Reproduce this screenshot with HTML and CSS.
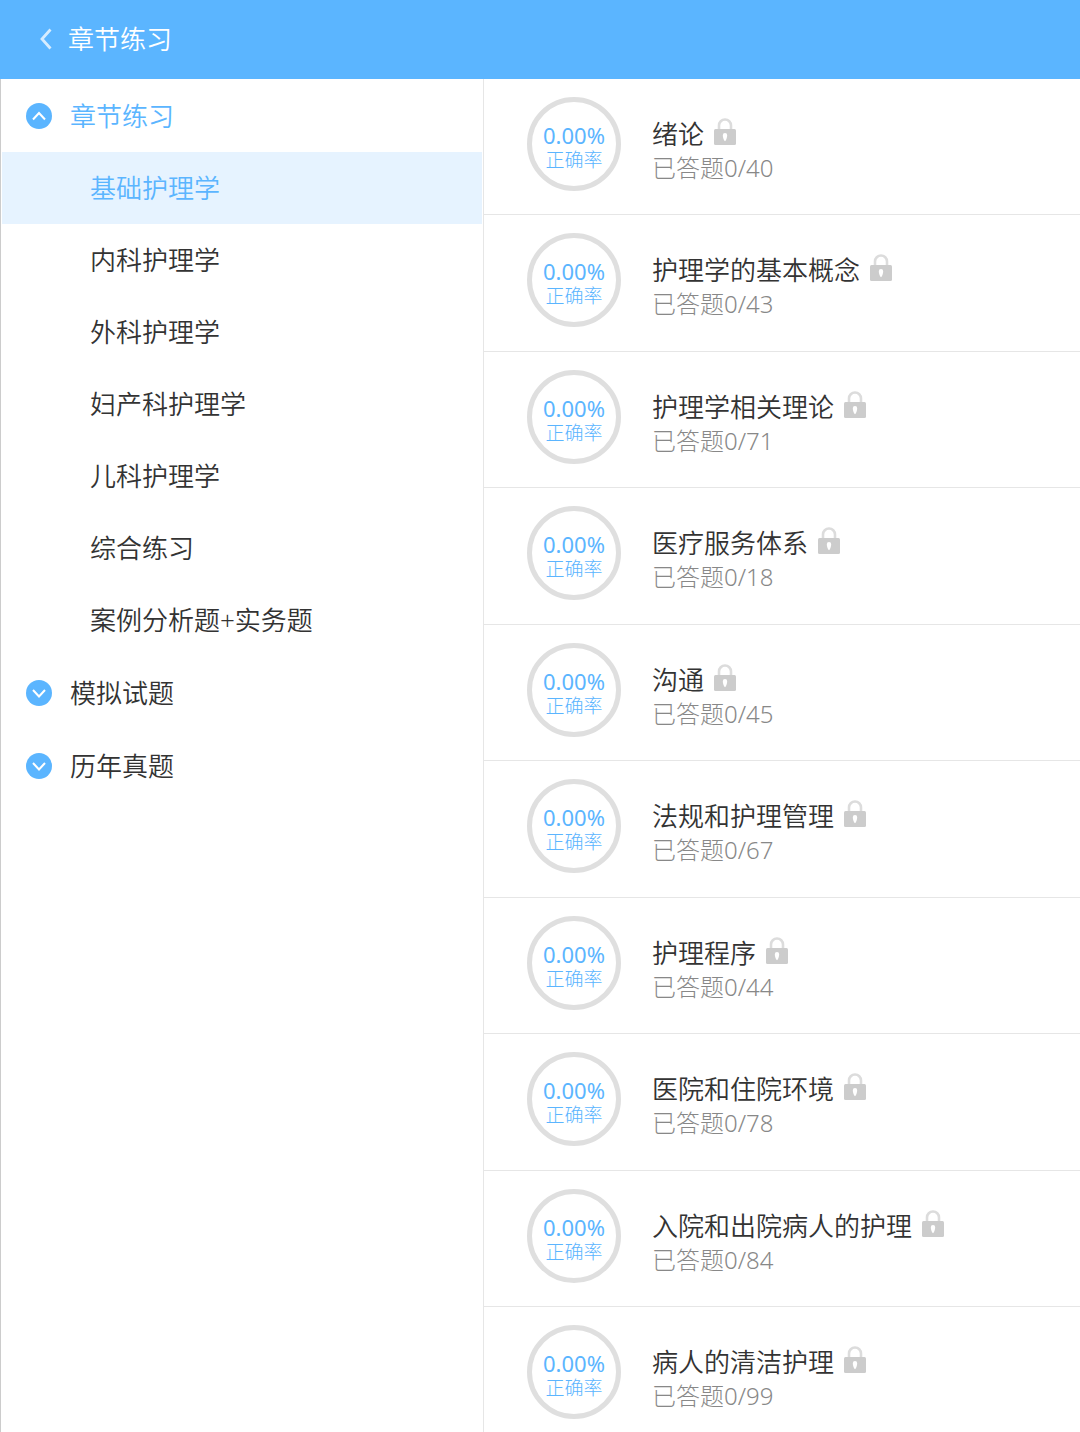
FILE: index.html
```
<!DOCTYPE html>
<html lang="zh-CN">
<head>
    <meta charset="UTF-8">
    <meta name="viewport" content="width=device-width, initial-scale=1.0">
    <title>章节练习</title>
    <link rel="stylesheet" href="styles.css">
</head>
<body>
    <svg class="icon-defs" aria-hidden="true">
        <symbol id="icon-lock" viewBox="0 0 22 27">
            <path d="M5 12V7.500a6 6 0 0 1 12 0V12" fill="none" stroke="#dcdcdc" stroke-width="2.600"/>
            <rect y="11" width="22" height="16" rx="1.500" fill="#ccc"/>
            <path d="M11 15a2.200 2.200 0 0 1 2.200 2.200c0 1.800-.8 5-2.200 6-1.400-1-2.200-4.200-2.200-6A2.200 2.200 0 0 1 11 15z" fill="#fff"/>
        </symbol>
        <symbol id="icon-up" viewBox="0 0 26 26">
            <circle cx="13" cy="13" r="13" fill="#5bb5ff"/>
            <path d="M7 16.500l6-6.500 6 6.500" fill="none" stroke="#fff" stroke-width="2"/>
        </symbol>
        <symbol id="icon-down" viewBox="0 0 26 26">
            <circle cx="13" cy="13" r="13" fill="#5bb5ff"/>
            <path d="M7 10l6 6.500 6-6.500" fill="none" stroke="#fff" stroke-width="2"/>
        </symbol>
    </svg>

    <header class="header">
        <button class="back-button" type="button" aria-label="返回">
            <svg class="back-icon" viewBox="0 0 12 22"><path d="M10.500 1.500L2 11l8.500 9.500" fill="none" stroke="#fff" stroke-opacity=".75" stroke-width="2.800"/></svg>
        </button>
        <h1 class="header-title">章节练习</h1>
    </header>

    <div class="container">
        <nav class="sidebar">
            <button class="group-title open" type="button" aria-expanded="true">
                <svg class="group-icon"><use href="#icon-up"/></svg>
                章节练习
            </button>
            <ul class="subject-list">
                <li><a class="subject active" href="#">基础护理学</a></li>
                <li><a class="subject" href="#">内科护理学</a></li>
                <li><a class="subject" href="#">外科护理学</a></li>
                <li><a class="subject" href="#">妇产科护理学</a></li>
                <li><a class="subject" href="#">儿科护理学</a></li>
                <li><a class="subject" href="#">综合练习</a></li>
                <li><a class="subject" href="#">案例分析题+实务题</a></li>
            </ul>
            <button class="group-title" type="button" aria-expanded="false">
                <svg class="group-icon"><use href="#icon-down"/></svg>
                模拟试题
            </button>
            <button class="group-title" type="button" aria-expanded="false">
                <svg class="group-icon"><use href="#icon-down"/></svg>
                历年真题
            </button>
        </nav>

        <main class="chapter-list" id="chapter-list"></main>
    </div>

    <script>
        const chapters = [
            { name: '绪论', total: 40 },
            { name: '护理学的基本概念', total: 43 },
            { name: '护理学相关理论', total: 71 },
            { name: '医疗服务体系', total: 18 },
            { name: '沟通', total: 45 },
            { name: '法规和护理管理', total: 67 },
            { name: '护理程序', total: 44 },
            { name: '医院和住院环境', total: 78 },
            { name: '入院和出院病人的护理', total: 84 },
            { name: '病人的清洁护理', total: 99 }
        ];

        document.getElementById('chapter-list').innerHTML = chapters.map(chapter => `
            <a class="chapter" href="#">
                <div class="rate">
                    <span class="rate-value">0.00%</span>
                    <span class="rate-label">正确率</span>
                </div>
                <div class="chapter-info">
                    <div class="chapter-name">${chapter.name}<svg class="lock-icon"><use href="#icon-lock"/></svg></div>
                    <div class="chapter-count">已答题0/${chapter.total}</div>
                </div>
            </a>
        `).join('');
    </script>
</body>
</html>
```

FILE: styles.css
```
* {
    box-sizing: border-box;
}

body {
    margin: 0;
    min-height: 100vh;
    display: flex;
    flex-direction: column;
    font-family: "Noto Sans", "Noto Sans CJK SC", sans-serif;
    font-size: 26px;
    font-weight: 350;
    line-height: 36px;
    color: #333;
    background: #fff;
}

button {
    padding: 0;
    border: none;
    background: none;
    font: inherit;
    color: inherit;
    cursor: pointer;
}

a {
    color: inherit;
    text-decoration: none;
}

.icon-defs {
    position: absolute;
    width: 0;
    height: 0;
}

.header {
    display: flex;
    align-items: center;
    height: 79px;
    padding: 0 40px 2px;
    background: #5bb5ff;
    color: #fff;
}

.back-button {
    display: flex;
    padding-right: 16px;
}

.back-icon {
    width: 12px;
    height: 22px;
}

.header-title {
    margin: 0;
    font-size: 26px;
    font-weight: inherit;
}

.container {
    flex: 1;
    display: grid;
    grid-template-columns: minmax(0, 121fr) minmax(0, 149fr);
}

.sidebar {
    padding: 0 1px;
    border-left: 1px solid #ccc;
    border-right: 1px solid #e6e6e6;
}

.group-title {
    display: flex;
    align-items: center;
    gap: 18px;
    width: 100%;
    height: 73px;
    padding-left: 24px;
    text-align: left;
}

.group-title.open {
    color: #5bb5ff;
}

.group-icon {
    width: 26px;
    height: 26px;
}

.subject-list {
    margin: 0;
    padding: 0;
    list-style: none;
}

.subject {
    display: flex;
    align-items: center;
    height: 72px;
    padding-left: 88px;
}

.subject.active {
    background: #e6f3ff;
    color: #5bb5ff;
}

.chapter {
    display: flex;
    align-items: flex-start;
    gap: 31px;
    height: 136px;
    padding: 18px 43px 0;
    border-bottom: 1px solid #e6e6e6;
}

.chapter:nth-child(even) {
    height: 137px;
}

.rate {
    display: flex;
    flex-direction: column;
    align-items: center;
    justify-content: center;
    width: 94px;
    height: 94px;
    padding-top: 8px;
    border: 5px solid #dfdfdf;
    border-radius: 50%;
    line-height: 25px;
    color: #5bb5ff;
}

.rate-value {
    font-size: 22px;
    font-weight: 400;
}

.rate-label {
    font-size: 19px;
    font-weight: 300;
}

.chapter-info {
    padding-top: 19px;
}

.chapter-name {
    display: flex;
    align-items: center;
    gap: 10px;
    line-height: 36px;
}

.lock-icon {
    width: 22px;
    height: 27px;
    margin-bottom: 6px;
}

.chapter-count {
    font-size: 24px;
    font-weight: 300;
    line-height: 32px;
    color: #888;
}
```
